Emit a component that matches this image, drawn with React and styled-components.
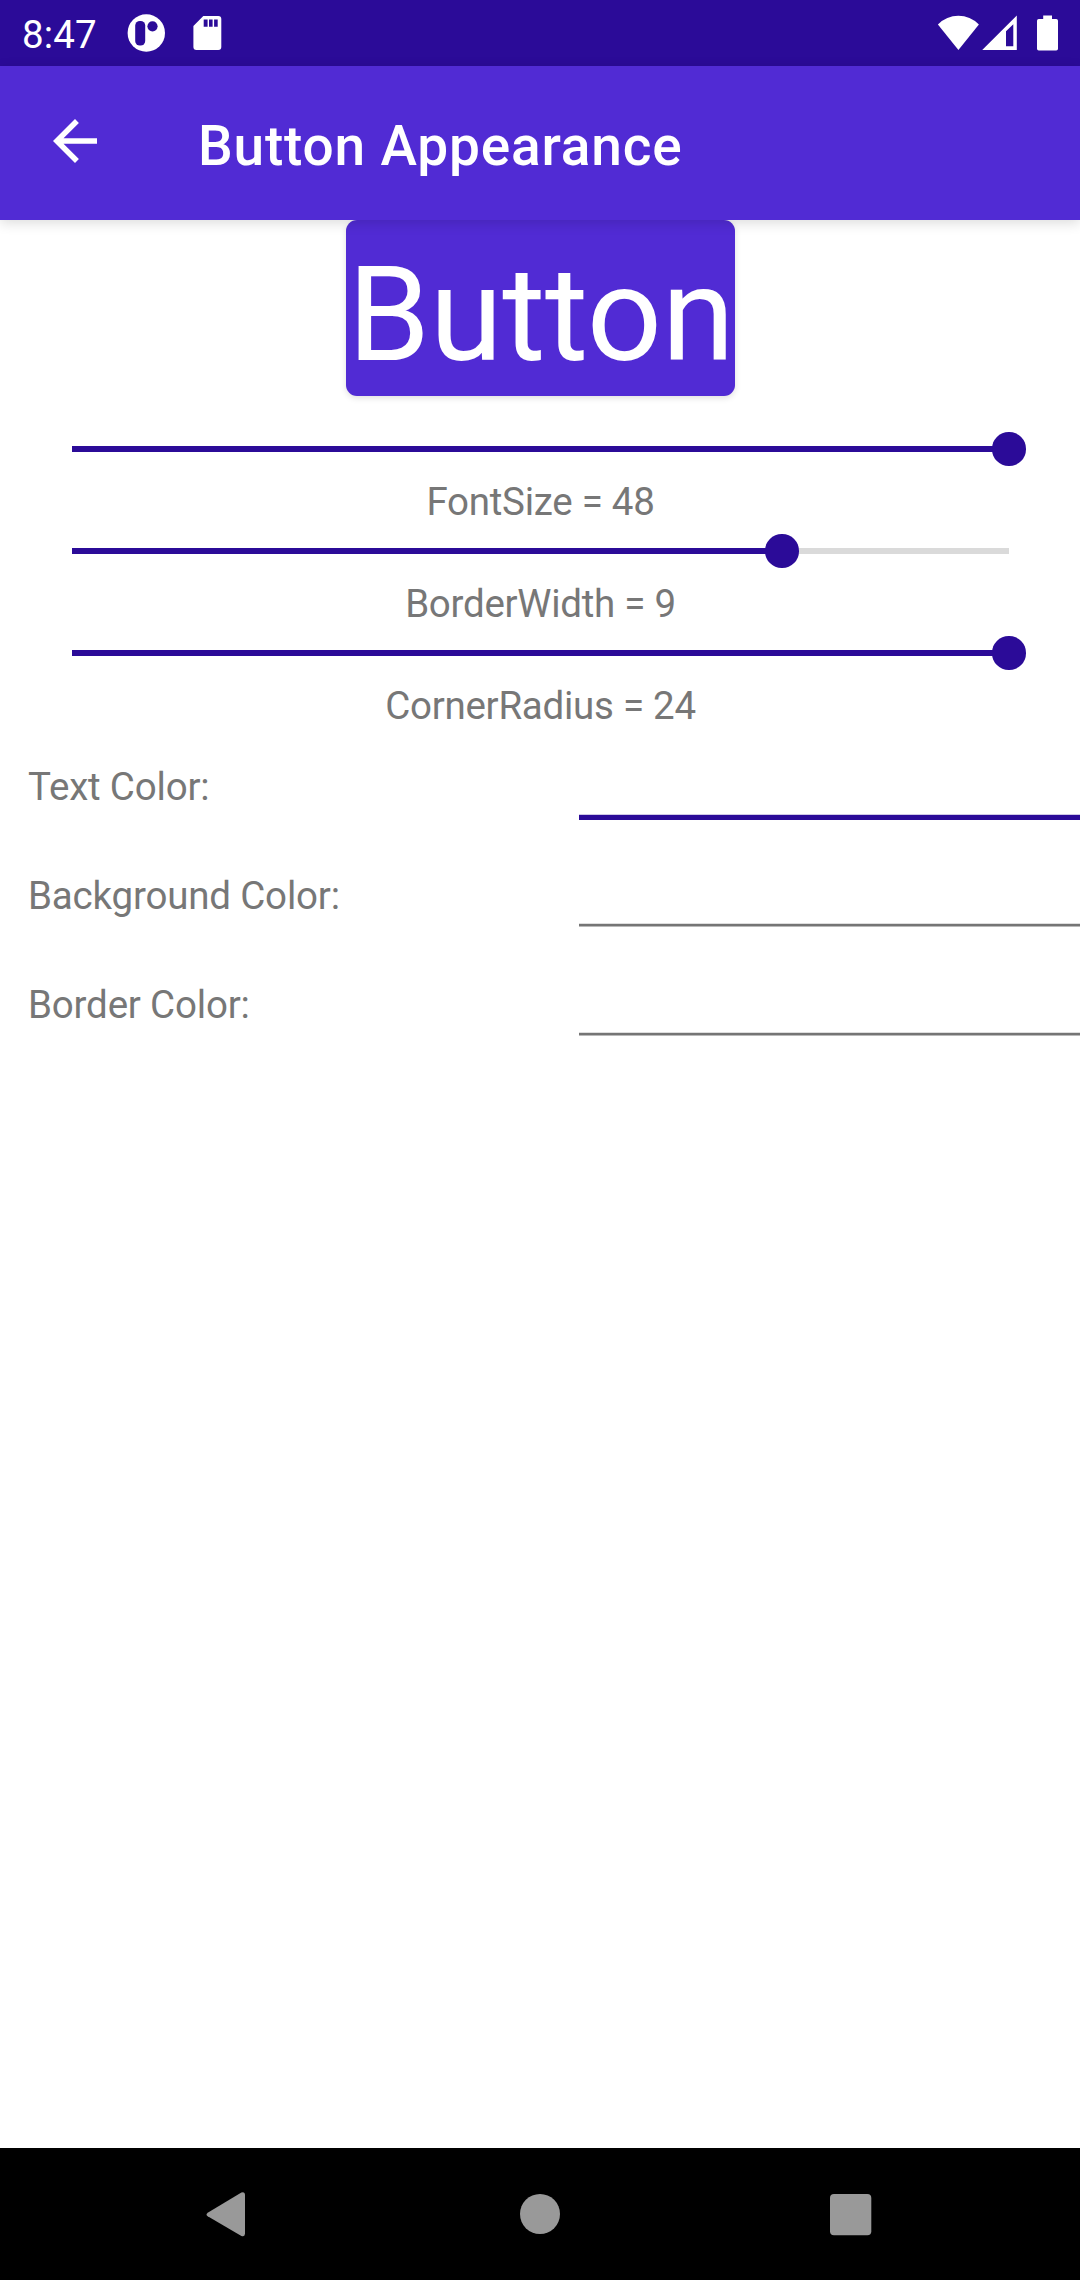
import React from "react";
import styled, { createGlobalStyle } from "styled-components";

const Global = createGlobalStyle`
  * { box-sizing: border-box; }
  html, body { margin: 0; padding: 0; background: #fff; }
  body { font-family: Roboto, "Liberation Sans", sans-serif; overflow: hidden; }
`;

const PRIMARY = "#512bd4";
const PRIMARY_DARK = "#2b0b98";

const Screen = styled.div`
  width: 1080px;
  height: 2280px;
  display: flex;
  flex-direction: column;
  background: #fff;
`;

const StatusBar = styled.header`
  height: 66px;
  padding: 0 20px 0 22px;
  display: flex;
  align-items: center;
  justify-content: space-between;
  background: ${PRIMARY_DARK};
  color: #fff;
`;

const StatusGroup = styled.div`
  display: flex;
  align-items: center;
`;

const Clock = styled.span`
  width: 105px;
  font-size: 38.5px;
  line-height: 66px;
  letter-spacing: 0.1px;
  padding-top: 3px;
`;

const StatusIcon = styled.svg`
  display: block;
  flex: none;
  margin-left: ${(p) => p.$gap || 0}px;
`;

const AppBar = styled.div`
  height: 154px;
  flex: none;
  padding-left: 42px;
  display: flex;
  align-items: center;
  background: ${PRIMARY};
  color: #fff;
  z-index: 1;
  box-shadow: 0 3px 12px rgba(0, 0, 0, 0.14);
`;

const BackButton = styled.button`
  width: 66px;
  height: 66px;
  margin: 0 90px 4px 0;
  padding: 0;
  border: 0;
  background: none;
  color: inherit;
  svg { display: block; }
`;

const Title = styled.h1`
  margin: 0;
  padding-top: 6px;
  font-size: 55px;
  font-weight: 500;
  line-height: 74px;
  letter-spacing: 0.82px;
  white-space: nowrap;
`;

const Content = styled.main`
  flex: 1;
  display: flex;
  flex-direction: column;
`;

const PreviewButton = styled.button`
  align-self: center;
  width: 389px;
  height: 176px;
  margin: 0 0 28px;
  padding: 7px 0 0 2px;
  border: 0;
  border-radius: 11px;
  background: ${PRIMARY};
  color: #fff;
  font-family: inherit;
  font-size: 132px;
  line-height: 176px;
  letter-spacing: -0.3px;
  white-space: nowrap;
  box-shadow: 0 2px 6px rgba(0, 0, 0, 0.13);
`;

const SliderRow = styled.div`
  height: 50px;
  padding: 0 71px 0 72px;
  display: flex;
  align-items: center;
`;

const Track = styled.div`
  flex: 1;
  height: 6px;
  display: flex;
  align-items: center;
  background: #dadada;
`;

const Fill = styled.div`
  height: 6px;
  flex: none;
  background: ${PRIMARY_DARK};
`;

const Thumb = styled.div`
  width: 33.4px;
  height: 33.4px;
  flex: none;
  margin: 0 -16.7px;
  border-radius: 50%;
  background: ${PRIMARY_DARK};
`;

const ValueLabel = styled.div`
  height: 52px;
  padding-left: 1px;
  font-size: 38.5px;
  line-height: 56px;
  letter-spacing: -0.27px;
  text-align: center;
  color: #777;
`;

const FieldRow = styled.label`
  height: 109px;
  padding-left: 28px;
  display: grid;
  grid-template-columns: 551px 1fr;
`;

const FieldLabel = styled.span`
  padding-top: 5px;
  font-size: 38.5px;
  line-height: 104px;
  letter-spacing: -0.18px;
  color: #777;
`;

const Entry = styled.input`
  width: 100%;
  min-width: 0;
  height: 91px;
  padding: 0 11px;
  border: 0;
  border-radius: 0;
  outline: 0;
  font: inherit;
  font-size: 38.5px;
  caret-color: transparent;
  background: ${(p) =>
    p.$active
      ? `linear-gradient(to bottom, transparent 84px, #cfc8e6 84px 85px, ${PRIMARY_DARK} 85px 90px, transparent 90px)`
      : "linear-gradient(to bottom, transparent 84px, #dedede 84px 85px, #757575 85px 87px, #b9b9b9 87px 88px, transparent 88px)"};
`;

const NavBar = styled.nav`
  height: 132px;
  display: flex;
  align-items: center;
  justify-content: center;
  gap: 246px;
  background: #000;
`;

const NavIcon = styled.svg`
  width: 66px;
  height: 66px;
  display: block;
  fill: #999;
`;

function Slider({ name, value, percent }) {
  return (
    <>
      <SliderRow>
        <Track>
          <Fill style={{ width: `${percent}%` }} />
          <Thumb />
        </Track>
      </SliderRow>
      <ValueLabel>{`${name} = ${value}`}</ValueLabel>
    </>
  );
}

const sliders = [
  { name: "FontSize", value: 48, percent: 100 },
  { name: "BorderWidth", value: 9, percent: 75.77 },
  { name: "CornerRadius", value: 24, percent: 100 },
];

const fields = ["Text Color:", "Background Color:", "Border Color:"];

export default function App() {
  return (
    <Screen>
      <Global />
      <StatusBar>
        <StatusGroup>
          <Clock>8:47</Clock>
          <StatusIcon width="38" height="38" viewBox="0 0 38 38">
            <circle cx="19.3" cy="19" r="18.7" fill="#fff" />
            <rect x="8.2" y="7" width="10" height="24.5" rx="4.6" fill={PRIMARY_DARK} />
            <circle cx="25.5" cy="12.3" r="5.1" fill={PRIMARY_DARK} />
          </StatusIcon>
          <StatusIcon $gap={28} width="29" height="36" viewBox="0 0 29 36">
            <path
              fill="#fff"
              fillRule="evenodd"
              d="M10.3 1H25.3Q28.3 1 28.3 4V32Q28.3 35 25.3 35H3.4Q.4 35 .4 32V11ZM10.7 4.5V11.7H14.6V4.5ZM16 4.5V11.7H19.6V4.5ZM21.1 4.5V11.7H24.7V4.5Z"
            />
          </StatusIcon>
        </StatusGroup>
        <StatusGroup>
          <StatusIcon width="42" height="36" viewBox="0 0 42 36">
            <path fill="#fff" d="M.9 9.5Q9.6 .8 21.4 .8T41.9 9.5L21.4 35Z" />
          </StatusIcon>
          <StatusIcon $gap={2} width="36" height="36" viewBox="0 0 36 36">
            <path fill="#fff" fillRule="evenodd" d="M1.2 35L35.8 .6V35ZM25 16.2V31.3H32.3V9.2Z" />
          </StatusIcon>
          <StatusIcon $gap={18} width="25" height="36" viewBox="0 0 25 36">
            <path
              fill="#fff"
              d="M8.2 .5H17V4H21.2Q23 4 23 5.8V33.8Q23 35.6 21.2 35.6H3.8Q2 35.6 2 33.8V5.8Q2 4 3.8 4H8.2Z"
            />
          </StatusIcon>
        </StatusGroup>
      </StatusBar>
      <AppBar>
        <BackButton aria-label="Back">
          <svg width="66" height="66" viewBox="0 0 24 24" fill="currentColor">
            <path d="M20 11H7.83l5.59-5.59L12 4l-8 8 8 8 1.41-1.41L7.83 13H20v-2z" />
          </svg>
        </BackButton>
        <Title>Button Appearance</Title>
      </AppBar>
      <Content>
        <PreviewButton>Button</PreviewButton>
        {sliders.map((s) => (
          <Slider key={s.name} {...s} />
        ))}
        {fields.map((f, i) => (
          <FieldRow key={f}>
            <FieldLabel>{f}</FieldLabel>
            <Entry $active={i === 0} />
          </FieldRow>
        ))}
      </Content>
      <NavBar>
        <NavIcon viewBox="0 0 66 66">
          <path d="M12.7 31.7L46.4 11.5Q50 10.2 50 13.8V52.6Q50 56.2 46.4 54.9L12.7 35.3Q10.3 33.5 12.7 31.7Z" />
        </NavIcon>
        <NavIcon viewBox="0 0 66 66">
          <circle cx="33" cy="33" r="20" />
        </NavIcon>
        <NavIcon viewBox="0 0 66 66">
          <rect x="11" y="13" width="41.3" height="41.3" rx="4" />
        </NavIcon>
      </NavBar>
    </Screen>
  );
}
